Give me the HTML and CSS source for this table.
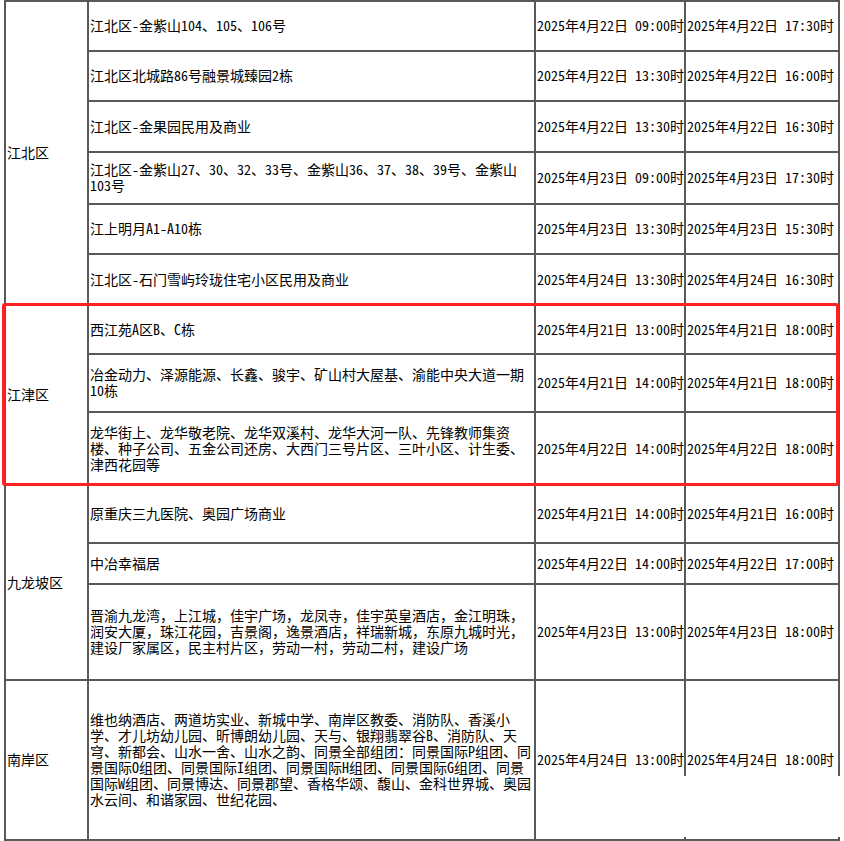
FILE: index.html
```html
<!DOCTYPE html>
<html lang="zh-CN">
<head>
<meta charset="utf-8">
<title>停电计划</title>
<link rel="stylesheet" href="styles.css">
</head>
<body>
<div class="page">
<table class="grid">
<colgroup><col class="c-area"><col class="c-place"><col class="c-time"><col class="c-time2"></colgroup>
<tbody>
<tr class="h50"><td rowspan="6" class="area">江北区</td><td>江北区-金紫山104、105、106号</td><td class="t">2025年4月22日 09:00时</td><td class="t">2025年4月22日 17:30时</td></tr>
<tr class="h50"><td>江北区北城路86号融景城臻园2栋</td><td class="t">2025年4月22日 13:30时</td><td class="t">2025年4月22日 16:00时</td></tr>
<tr class="h51"><td>江北区-金果园民用及商业</td><td class="t">2025年4月22日 13:30时</td><td class="t">2025年4月22日 16:30时</td></tr>
<tr class="h52"><td>江北区-金紫山27、30、32、33号、金紫山36、37、38、39号、金紫山103号</td><td class="t">2025年4月23日 09:00时</td><td class="t">2025年4月23日 17:30时</td></tr>
<tr class="h50"><td>江上明月A1-A10栋</td><td class="t">2025年4月23日 13:30时</td><td class="t">2025年4月23日 15:30时</td></tr>
<tr class="h51"><td>江北区-石门雪屿玲珑住宅小区民用及商业</td><td class="t">2025年4月24日 13:30时</td><td class="t">2025年4月24日 16:30时</td></tr>
<tr class="h49"><td rowspan="3" class="area">江津区</td><td>西江苑A区B、C栋</td><td class="t">2025年4月21日 13:00时</td><td class="t">2025年4月21日 18:00时</td></tr>
<tr class="h58"><td>冶金动力、泽源能源、长鑫、骏宇、矿山村大屋基、渝能中央大道一期10栋</td><td class="t">2025年4月21日 14:00时</td><td class="t">2025年4月21日 18:00时</td></tr>
<tr class="h73"><td>龙华街上、龙华敬老院、龙华双溪村、龙华大河一队、先锋教师集资楼、种子公司、五金公司还房、大西门三号片区、三叶小区、计生委、津西花园等</td><td class="t">2025年4月22日 14:00时</td><td class="t">2025年4月22日 18:00时</td></tr>
<tr class="h58"><td rowspan="3" class="area">九龙坡区</td><td>原重庆三九医院、奥园广场商业</td><td class="t">2025年4月21日 14:00时</td><td class="t">2025年4月21日 16:00时</td></tr>
<tr class="h41"><td>中冶幸福居</td><td class="t">2025年4月22日 14:00时</td><td class="t">2025年4月22日 17:00时</td></tr>
<tr class="h96"><td>晋渝九龙湾，上江城，佳宇广场，龙凤寺，佳宇英皇酒店，金江明珠，润安大厦，珠江花园，吉景阁，逸景酒店，祥瑞新城，东原九城时光，建设厂家属区，民主村片区，劳动一村，劳动二村，建设广场</td><td class="t">2025年4月23日 13:00时</td><td class="t">2025年4月23日 18:00时</td></tr>
<tr class="h160"><td class="area">南岸区</td><td>维也纳酒店、两道坊实业、新城中学、南岸区教委、消防队、香溪小学、才儿坊幼儿园、昕博朗幼儿园、天与、银翔翡翠谷B、消防队、天穹、新都会、山水一舍、山水之韵、同景全部组团：同景国际P组团、同景国际O组团、同景国际I组团、同景国际H组团、同景国际G组团、同景国际W组团、同景博达、同景郡望、香格华颂、馥山、金科世界城、奥园水云间、和谐家园、世纪花园、</td><td class="t">2025年4月24日 13:00时</td><td class="t">2025年4月24日 18:00时</td></tr>
</tbody>
</table>
<div class="mark"></div>
<div class="gap"></div>
</div>
</body>
</html>
```
FILE: styles.css
```css
html, body {
  margin: 0;
  padding: 0;
  background: #fff;
}
.page {
  position: relative;
  width: 844px;
  height: 841px;
  overflow: hidden;
}
.grid {
  margin: 0 0 0 4px;
  border-collapse: collapse;
  table-layout: fixed;
  width: 836px;
  font-family: "Noto Sans Mono CJK SC", "Noto Sans CJK SC", sans-serif;
  font-size: 14px;
  line-height: 16px;
  color: #000;
}
.c-area { width: 83px; }
.c-place { width: 447px; }
.c-time { width: 150px; }
.c-time2 { width: 154px; }
.grid td {
  border: 2px solid #595959;
  padding: 0 0 2px 1px;
  vertical-align: middle;
  text-align: left;
}
.grid td.t { white-space: nowrap; }
.h41 { height: 41px; }
.h49 { height: 49px; }
.h50 { height: 50px; }
.h51 { height: 51px; }
.h52 { height: 52px; }
.h58 { height: 58px; }
.h73 { height: 73px; }
.h96 { height: 96px; }
.h160 { height: 160px; }
.mark {
  position: absolute;
  left: 2px;
  top: 303px;
  width: 837px;
  height: 183px;
  box-sizing: border-box;
  border: 3px solid #ff2222;
  border-radius: 3px;
}
.gap {
  position: absolute;
  left: 682px;
  top: 776px;
  width: 162px;
  height: 61px;
  background: #fff;
}
```
